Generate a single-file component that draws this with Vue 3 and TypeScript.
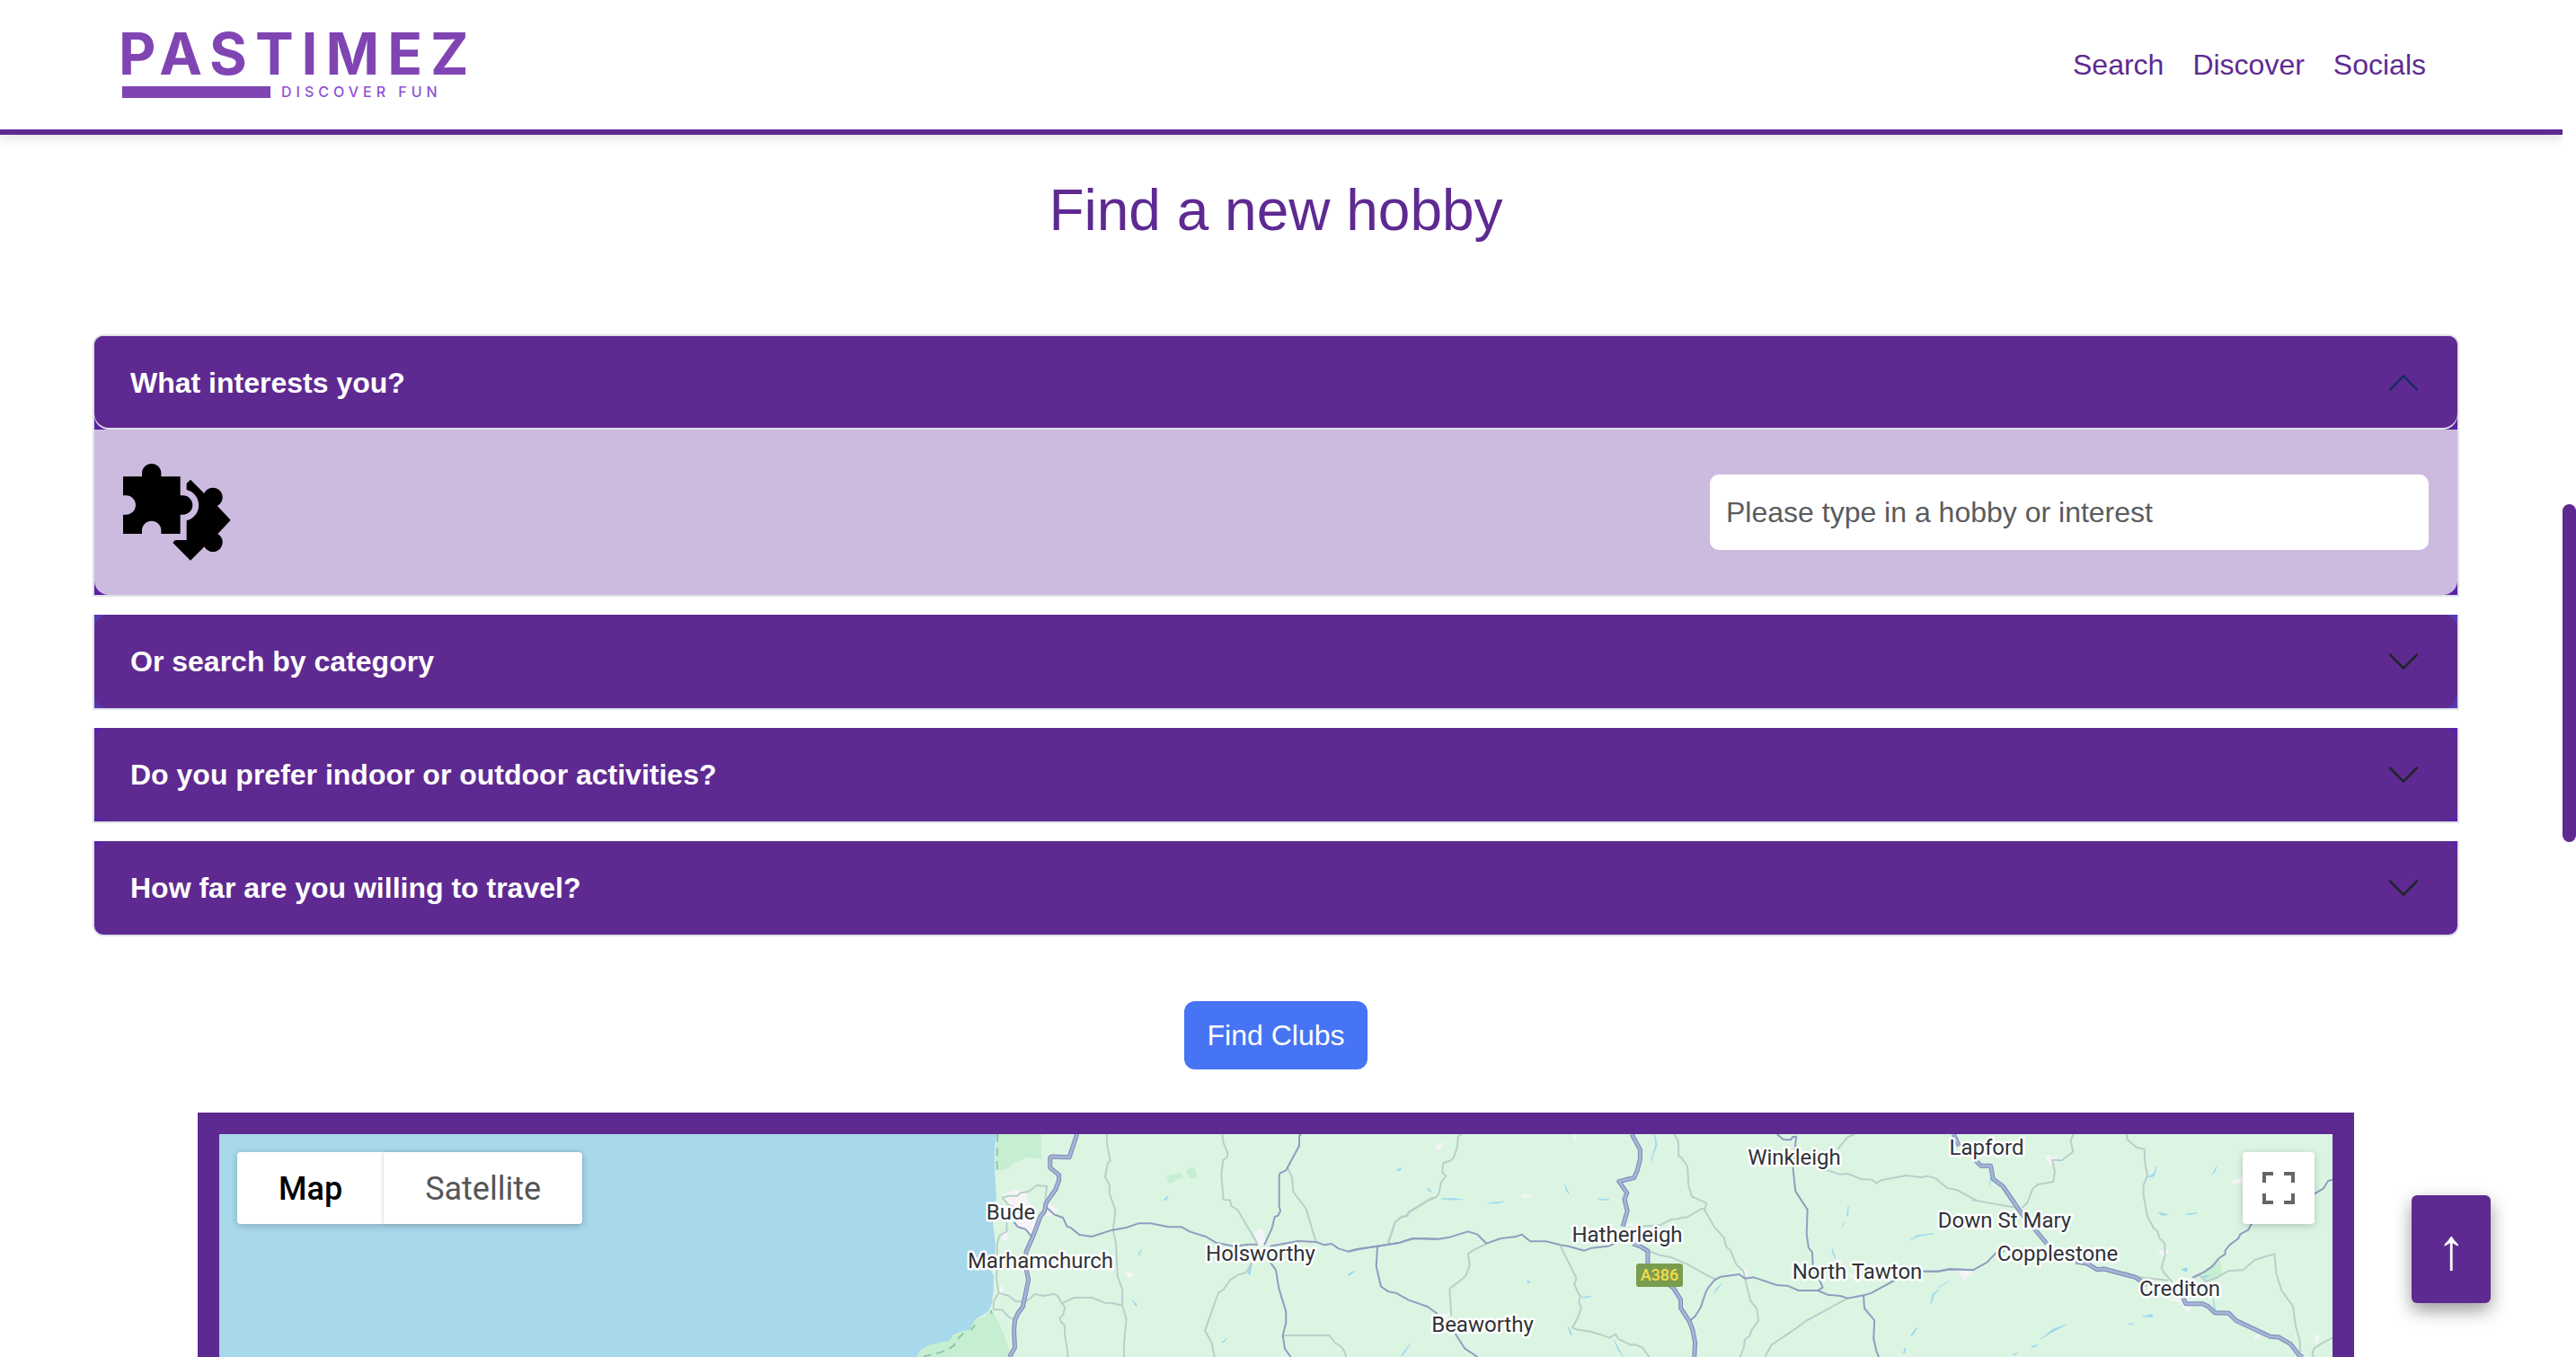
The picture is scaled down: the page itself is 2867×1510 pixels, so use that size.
<script setup lang="ts">
import { ref } from 'vue'

interface Question {
  id: string
  title: string
}

interface Place {
  name: string
  x: number
  y: number
}

interface Tile {
  x: number
  width: number
  green: string[]
  towns: string
  streams: string
  lanes: string[]
  roads: string[]
  trunks: string[]
}

const links: string[] = ['Search', 'Discover', 'Socials']

const questions: Question[] = [
  { id: 'interests', title: 'What interests you?' },
  { id: 'category', title: 'Or search by category' },
  { id: 'setting', title: 'Do you prefer indoor or outdoor activities?' },
  { id: 'distance', title: 'How far are you willing to travel?' },
]

const openId = ref<string>('interests')
const hobby = ref<string>('')

function toggle(id: string): void {
  openId.value = openId.value === id ? '' : id
}

const places: Place[] = [
  { name: 'Bude', x: 881, y: 95 },
  { name: 'Marhamchurch', x: 914, y: 149 },
  { name: 'Holsworthy', x: 1159, y: 141 },
  { name: 'Hatherleigh', x: 1567, y: 120 },
  { name: 'Winkleigh', x: 1753, y: 34 },
  { name: 'North Tawton', x: 1823, y: 161 },
  { name: 'Beaworthy', x: 1406, y: 220 },
  { name: 'Lapford', x: 1967, y: 23 },
  { name: 'Down St Mary', x: 1987, y: 104 },
  { name: 'Copplestone', x: 2046, y: 141 },
  { name: 'Crediton', x: 2182, y: 180 },
]

const tiles: Tile[] = [
  {
    x: 656,
    width: 700,
    green: [
      'M470 126H580V200L584 208L543 204L508 226L500 240L466 250Z',
      'M455 712L472 750L486 790L497 840L503 850L495 870H268L280 845L300 830L350 816L362 795L400 780L415 745L440 735Z',
      'M892 264L908 262L913 286L897 291ZM908 262L928 254L935 270L914 280ZM942 245L956 236L966 248L966 272L954 276L943 262Z',
    ],
    towns:
      'M482 328L515 313L543 316L546 350L560 370L565 410L570 440L556 468L535 450L515 420L500 360ZM596 355L624 378L610 396L590 400ZM1110 452L1130 442L1142 495L1122 500ZM790 582L814 594L798 608ZM480 460L494 450L496 480L484 480ZM470 640L484 628L482 656L474 656ZM1052 356L1066 380L1056 376ZM1560 164L1568 160V180Z',
    streams:
      'M885 346L896 332L892 346ZM822 530L830 510L826 526ZM808 680L820 700L814 698ZM1095 590L1106 555L1100 596ZM1466 246L1478 240L1474 248ZM1543 306L1552 318L1546 316ZM1345 598L1361 584L1355 592ZM1030 822L1042 808L1036 820Z',
    lanes: [
      'M743 126L744 160L752 215L746 222L739 268L750 296V325L765 380L759 445L766 490L770 598L782 645V698L792 744L786 830V870',
      'M1031 126L1034 155L1045 190L1043 204L1033 212L1029 262L1034 345L1050 346L1054 366L1070 380L1118 490',
      'M1194 238L1205 270L1208 318L1240 375L1265 486',
      'M482 338L498 332H520L528 322L548 318L569 297L594 300L590 340L594 360M484 340L498 362L515 372L525 392',
      'M494 420V450L476 465L470 490V560L468 610L474 656L461 684V712H482L500 738L512 743',
      'M474 656L488 662L496 664L518 685H540L552 675L564 660L584 666L612 659L622 668L631 691L662 672H706L738 689L757 690L782 698',
      'M631 691L639 704L634 730L626 740L628 750L638 765L639 800L646 855L645 870',
      'M1105 556L1090 588L1070 596L1050 614L1035 644L1021 657L988 782L1004 820L1012 870',
      'M1182 798H1298L1312 822L1328 836L1336 852L1340 870',
      'M1444 494L1461 422L1476 404L1492 400L1496 388L1548 345L1566 336',
    ],
    roads: [
      'M1228 126L1223 132V165L1190 247L1175 256L1173 265V365L1176 383L1170 398L1162 402L1155 440L1136 496',
      'M594 372L612 394L634 405L644 434L655 440L675 462L706 468L757 446L792 438L822 424H853L897 436H930L951 452L990 468L1015 488L1060 500L1098 494H1120',
      'M1150 500L1220 483L1265 486L1286 496L1304 492L1321 508L1346 518L1364 512L1418 500L1474 488L1506 474L1568 476',
      'M1150 552L1165 580L1172 640L1190 718V756L1182 798L1187 842L1202 870',
      'M512 420L522 436L540 443L556 468',
      'M1418 500L1415 568L1427 635L1446 652L1464 656L1496 680L1543 702L1568 726',
    ],
    trunks: [
      'M669 126L650 203L606 201L602 205V238L624 262V280L616 310L592 355L588 384L578 400L560 465L542 520L540 560L548 612L534 702L522 724L514 748L512 780L514 838L501 870',
    ],
  },
  {
    x: 1256,
    width: 700,
    green: [],
    towns:
      'M216 164L244 152L228 180ZM428 328L460 331L440 342ZM560 126H568V162ZM692 430L708 418L716 436ZM978 568L996 576L998 600L986 604ZM1245 590L1290 600L1270 624ZM1164 232L1194 238L1184 250ZM1526 580L1560 584L1538 614ZM222 728L258 722L250 740Z',
    streams:
      'M122 246L132 240L128 248ZM200 306L208 318ZM234 342L262 341L286 344L260 345ZM350 356L388 351L372 357ZM541 294L552 326L546 318ZM622 342L652 345L634 346ZM764 126L771 160L756 216L768 160ZM1230 438L1240 422L1233 434ZM1244 400L1248 366L1247 396ZM1403 480L1420 464L1460 458L1422 467ZM1208 508L1216 542L1210 528ZM1454 692L1458 660L1474 646L1460 664ZM1404 798L1418 772L1410 796ZM582 670L606 668L590 673ZM550 770L560 798L554 792ZM664 814L686 868L674 846ZM132 868L156 824L142 856ZM0 596L16 582L8 590ZM914 656L932 626L920 640ZM446 618L455 616L450 624ZM1386 856L1391 840L1388 858Z',
    lanes: [
      'M282 126L275 134L273 168L264 206L254 216L238 222L236 254L245 266L233 286L227 325L221 336L205 342L152 386L147 398L134 402L118 420L100 494',
      'M346 492L312 514L300 526L304 564L294 600L254 643L258 732',
      'M530 500L570 606L565 626L574 655L580 666L576 686L582 706L574 738L560 772L570 778L600 784L625 793L652 806L668 794L675 810L706 830L715 828L734 838L752 870',
      'M814 126L824 150L825 201L832 204L847 234L850 300L858 334L894 356L890 380L914 436L938 472L943 500L955 516L968 560L986 582L996 640L1004 682L1020 710L1024 748L1006 782L1002 800L990 812L987 840L978 870',
      'M890 375L880 376L846 404L832 404L822 410L808 410L778 430L730 434',
      'M750 516L778 530L804 536L846 560L894 596L912 608H922',
      'M1264 126L1246 136L1222 176M1190 244L1226 260L1247 258L1280 276L1306 278L1318 290L1330 280L1392 264L1430 270L1446 266L1466 274L1494 306L1518 312L1568 348',
      'M1246 674L1142 750L1120 772L1056 830L1040 870',
    ],
    roads: [
      'M0 518L22 510L74 500L130 488L165 474L226 476L254 470L300 451L322 460L346 491L382 474L420 468L434 461L455 484H494L530 496L550 500L590 515L608 506L650 500L668 490',
      'M1070 126L1086 144L1104 145L1110 135L1118 134L1116 160L1110 240L1116 316L1146 378L1144 460L1149 506L1158 520L1160 575L1172 600L1184 638L1172 648H1124L1096 632L1070 630L1012 604L990 608L976 594L930 602L914 614L898 640L892 656L880 704L866 734L852 750',
      'M1172 648L1196 662L1228 666L1246 674L1286 664L1306 656L1366 612',
      'M1286 664L1288 708L1306 736L1313 748L1311 810L1318 850L1324 870',
      'M268 792L292 842L324 870',
      'M1432 584H1474L1500 577L1560 580',
    ],
    trunks: [
      'M708 126L729 178V210L722 246L714 272L700 276L676 284L696 322L690 344L697 382L686 434',
      'M710 492L728 500L748 516V570L762 590L812 640L830 678V706L852 752L860 780L866 822L864 870',
    ],
  },
  {
    x: 1856,
    width: 767,
    green: ['M712 598L745 556L758 548L763 592L744 614L722 616Z'],
    towns:
      'M358 196L388 204L372 232ZM782 284L810 268V290L790 290ZM616 514L644 514L630 536ZM162 580L198 582L176 614ZM632 672L700 684L684 726L668 690ZM834 818L840 794L852 800ZM972 796L986 800L977 830ZM196 200L210 190L208 220Z',
    streams:
      'M592 270L606 260L614 234L608 266ZM740 262L750 234L746 252ZM618 388L640 394L626 397ZM680 392L706 389L692 394ZM670 578L683 572V586ZM720 600L734 598L722 606ZM742 672L748 718L744 700ZM582 734L604 728V736ZM350 810L380 776L408 762L384 780ZM328 836L342 830L334 838ZM54 798L70 772L60 792ZM100 692L107 654L104 680ZM38 856L42 838ZM116 640L140 618ZM286 862L298 856L290 864ZM234 298L236 270ZM550 760L562 757L554 762Z',
    lanes: [
      'M424 126L418 150L424 184L398 214L376 212L382 250L379 285L344 294L332 308L320 354L308 372',
      'M194 346L226 354L294 371',
      'M546 126L547 144L568 170L586 176L587 220L593 264L584 296V330L593 402L608 442L616 450L620 472L632 490L633 530L625 572L630 588L650 620',
      'M696 606L712 598L726 618L750 606L776 583L810 580L838 545L882 526L886 590L898 648L924 700L930 765L940 820V870',
      'M540 586L576 604L640 614',
      'M1014 806L990 824L972 842L968 860L972 870',
    ],
    roads: [
      'M1014 278L1004 282L993 308L972 326L850 380L828 430L822 446L804 460L800 474L780 496L770 514V526L756 540L740 568L722 586L696 604',
      'M86 584H114L144 577L196 580L228 554L250 520L268 516',
    ],
    trunks: [
      'M152 126L164 166M202 214L214 232H236L242 276L264 300L304 386L364 492M430 552L456 558L478 578L494 576L566 604L592 630M674 672L680 692H718L732 702L746 722L778 724L794 748L872 802L892 804L918 826L938 864L946 870',
    ],
  },
]

const seaTile = tiles[0]
</script>

<template>
  <div class="page">
    <header class="header">
      <a class="logo" href="#" aria-label="Pastimez home">
        <span class="logo-name">PASTIMEZ</span>
        <span class="logo-row">
          <span class="logo-bar"></span>
          <span class="logo-tag">DISCOVER FUN</span>
        </span>
      </a>
      <nav class="nav">
        <a v-for="link in links" :key="link" :href="'#' + link.toLowerCase()">{{ link }}</a>
      </nav>
    </header>

    <main class="main">
      <h1 class="title">Find a new hobby</h1>

      <div class="accordion">
        <section
          v-for="q in questions"
          :key="q.id"
          class="item"
          :class="{ open: openId === q.id, accent: q.id === 'category' }"
        >
          <h2 class="item-heading">
            <button class="item-button" type="button" :aria-expanded="openId === q.id" @click="toggle(q.id)">
              <span>{{ q.title }}</span>
              <svg class="chevron" viewBox="0 0 16 16" aria-hidden="true">
                <path
                  d="M1.646 4.646a.5.5 0 0 1 .708 0L8 10.293l5.646-5.647a.5.5 0 0 1 .708.708l-6 6a.5.5 0 0 1-.708 0l-6-6a.5.5 0 0 1 0-.708z"
                />
              </svg>
            </button>
          </h2>
          <div v-if="q.id === 'interests' && openId === q.id" class="item-body">
            <svg class="puzzle" viewBox="141 468 360 324" aria-hidden="true">
              <path
                d="M141 511H204V500A32 32 0 0 1 268 500V511H332V574H341A32 32 0 0 1 341 638H332V702H268V691A32 32 0 0 0 204 691V702H141V638H151A32 32 0 0 0 151 574H141Z"
              />
              <path
                d="M353 534L366 521L411 566L458 611L500 656L458 701L411 746L366 791L307 732Q311 723 318 723H353V658A53 53 0 0 0 353 555Z"
              />
              <circle cx="441" cy="580" r="32" />
              <circle cx="441" cy="730" r="32" />
            </svg>
            <input
              v-model="hobby"
              class="hobby"
              type="text"
              aria-label="Hobby or interest"
              placeholder="Please type in a hobby or interest"
            />
          </div>
        </section>
      </div>

      <button class="find" type="button">Find Clubs</button>

      <div class="map">
        <svg class="map-canvas" viewBox="0 0 2352 248" preserveAspectRatio="xMidYMin slice">
          <rect width="2352" height="248" fill="#dcf5e3" />
          <svg
            :x="seaTile.x"
            y="-42"
            :width="seaTile.width"
            height="290"
            viewBox="0 0 1568 870"
            preserveAspectRatio="none"
            overflow="visible"
          >
            <path
              d="M-1600 0H468V126L464 180V250L468 340L462 370L460 430L466 500L464 560L448 568L461 596V650L455 700L446 720L415 745L408 778L385 784L360 796L355 815L300 830L280 845L269 870V900H-1600Z"
              fill="#a7d8eb"
            />
          </svg>
          <svg
            v-for="tile in tiles"
            :key="tile.x"
            class="tile"
            :x="tile.x"
            y="-42"
            :width="tile.width"
            height="290"
            viewBox="0 0 1568 870"
            preserveAspectRatio="none"
            overflow="visible"
          >
            <path v-for="d in tile.green" :key="d" class="green" :d="d" />
            <path class="towns" :d="tile.towns" />
            <path class="streams" :d="tile.streams" />
            <path v-for="d in tile.lanes" :key="d" class="lane" :d="d" />
            <path v-for="d in tile.roads" :key="d" class="road" :d="d" />
            <path v-for="d in tile.trunks" :key="'edge' + d" class="trunk-edge" :d="d" />
            <path v-for="d in tile.trunks" :key="d" class="trunk" :d="d" />
          </svg>
          <svg
            :x="seaTile.x"
            y="-42"
            :width="seaTile.width"
            height="290"
            viewBox="0 0 1568 870"
            preserveAspectRatio="none"
          >
            <path class="coast" d="M471 126L469 215L471 248M454 714L457 726M415 764L404 780M386 790L368 815L362 832L345 846L325 856L282 870" />
          </svg>
          <rect x="1577" y="144" width="52" height="26" rx="3" fill="#7a9c4f" />
          <text class="shield" x="1603" y="163">A386</text>
          <text v-for="p in places" :key="p.name" class="place-label" :x="p.x" :y="p.y">{{ p.name }}</text>
        </svg>

        <div class="map-bar">
          <div class="map-types">
            <button class="map-type active" type="button">Map</button>
            <button class="map-type" type="button">Satellite</button>
          </div>
          <button class="fullscreen" type="button" aria-label="Toggle fullscreen view">
            <svg viewBox="0 0 18 18" aria-hidden="true">
              <path d="M0 0v6h2V2h4V0H0zm16 0h-4v2h4v4h2V0h-2zm0 16h-4v2h6v-6h-2v4zM2 12H0v6h6v-2H2v-4z" />
            </svg>
          </button>
        </div>
      </div>
    </main>

    <button class="to-top" type="button" aria-label="Back to top">↑</button>
    <div class="scrollbar" aria-hidden="true"><div class="thumb"></div></div>
  </div>
</template>

<style>
body {
  margin: 0;
  background: #fff;
}
</style>

<style scoped>
.page {
  position: relative;
  box-sizing: border-box;
  display: flex;
  flex-direction: column;
  height: 100vh;
  padding-right: 15px;
  overflow: hidden;
  font-family: 'Liberation Sans', Arial, sans-serif;
  font-size: 32px;
  color: #5e2a91;
}

button,
input {
  box-sizing: border-box;
  margin: 0;
  font: inherit;
}

button {
  padding: 0;
  border: 0;
  cursor: pointer;
}

.header {
  flex: none;
  display: flex;
  align-items: center;
  justify-content: space-between;
  height: 144px;
  padding: 0 152px 0 132px;
  border-bottom: 6px solid #5e2a91;
  box-shadow: 0 4px 12px rgba(0, 0, 0, 0.12);
}

.logo {
  display: flex;
  flex-direction: column;
  gap: 12px;
  color: #8045b3;
  text-decoration: none;
  font-family: Inter, sans-serif;
}

.logo-name {
  font-size: 64px;
  font-weight: 700;
  line-height: 48px;
  letter-spacing: 9px;
}

.logo-row {
  display: flex;
  align-items: center;
  gap: 12px;
  padding-left: 4px;
}

.logo-bar {
  width: 165px;
  height: 13px;
  background: #8045b3;
}

.logo-tag {
  font-size: 16px;
  font-weight: 500;
  line-height: 13px;
  letter-spacing: 5px;
  color: #9050d4;
}

.nav {
  display: flex;
  gap: 32px;
}

.nav a {
  color: #5e2a91;
  text-decoration: none;
}

.main {
  flex: 1;
  min-height: 0;
  display: flex;
  flex-direction: column;
  align-items: center;
  padding: 46px 12px 0 0;
}

.title {
  margin: 0 0 100px;
  font-size: 64px;
  font-weight: 400;
  line-height: 76px;
}

.accordion {
  align-self: stretch;
  display: flex;
  flex-direction: column;
  gap: 20px;
  margin: 0 103px;
}

.item {
  border: 2px solid #dee2e6;
  border-top: 0;
  background: #5a22a6;
  overflow: hidden;
}

.item:first-child {
  border-top: 2px solid #dee2e6;
  border-radius: 12px 12px 0 0;
}

.item:last-child {
  border-radius: 0 0 12px 12px;
}

.item.accent {
  background: #5638b4;
}

.item-heading {
  margin: 0;
  font-size: 32px;
}

.item-button {
  display: flex;
  align-items: center;
  justify-content: space-between;
  width: 100%;
  height: 104px;
  padding: 0 40px;
  border-radius: 16px;
  background: #5e2a91;
  color: #fff;
  font-weight: 700;
  text-align: left;
}

.open .item-button {
  border-radius: 0 0 16px 16px;
  box-shadow: inset 0 -2px 0 #dee2e6;
}

.chevron {
  width: 40px;
  height: 40px;
  fill: #212529;
}

.open .chevron {
  fill: #1c2b63;
  transform: rotate(180deg);
}

.item-body {
  display: flex;
  align-items: center;
  justify-content: space-between;
  height: 184px;
  padding: 0 32px;
  border-radius: 0 0 16px 16px;
  background: #ccbbde;
}

.puzzle {
  width: 120px;
  height: 108px;
}

.hobby {
  width: 800px;
  height: 84px;
  padding: 0 16px;
  border: 2px solid #fff;
  border-radius: 10px;
  background: #fff;
  color: #212529;
}

.hobby::placeholder {
  color: #595c5f;
  opacity: 1;
}

.find {
  flex: none;
  height: 76px;
  margin: 72px 0 48px;
  padding: 0 26px;
  border-radius: 12px;
  background: #4674f4;
  color: #fff;
}

.map {
  position: relative;
  align-self: stretch;
  flex: 1;
  min-height: 0;
  margin: 0 220px;
  border: 24px solid #5e2a91;
  border-bottom: 0;
  overflow: hidden;
  font-family: Roboto, sans-serif;
}

.map-canvas {
  display: block;
  width: 100%;
  height: 100%;
}

.tile path {
  vector-effect: non-scaling-stroke;
  stroke-linejoin: round;
}

.green {
  fill: #c6eed0;
}

.towns {
  fill: #f5f5f7;
}

.streams {
  fill: #90d4ee;
  stroke: #a5dcee;
  stroke-width: 1;
}

.lane,
.road,
.trunk,
.trunk-edge {
  fill: none;
}

.lane {
  stroke: #b9cfca;
  stroke-width: 2;
}

.road {
  stroke: #8f9dbf;
  stroke-width: 2;
}

.trunk-edge {
  stroke: #7b88b2;
  stroke-width: 5;
}

.trunk {
  stroke: #a6b4d8;
  stroke-width: 3;
}

.coast {
  fill: none;
  stroke: #8cc7a8;
  stroke-width: 2;
  stroke-dasharray: 9 6;
  vector-effect: non-scaling-stroke;
}

.place-label {
  font-size: 24px;
  text-anchor: middle;
  fill: #2f3338;
  stroke: #fff;
  stroke-width: 5;
  stroke-linejoin: round;
  paint-order: stroke;
}

.shield {
  font-size: 18px;
  font-weight: 500;
  text-anchor: middle;
  fill: #f6dc4a;
}

.map-bar {
  position: absolute;
  top: 20px;
  right: 20px;
  left: 20px;
  display: flex;
  justify-content: space-between;
}

.map-types {
  display: flex;
  border-radius: 4px;
  box-shadow: 0 2px 8px rgba(0, 0, 0, 0.2);
}

.map-type {
  height: 80px;
  padding: 2px 46px 0;
  background: #fff;
  color: #565656;
  font-size: 36px;
}

.map-type:first-child {
  border-radius: 4px 0 0 4px;
}

.map-type:last-child {
  border-radius: 0 4px 4px 0;
  box-shadow: -1px 0 4px rgba(0, 0, 0, 0.15);
}

.map-type.active {
  color: #000;
  font-weight: 500;
}

.fullscreen {
  display: flex;
  align-items: center;
  justify-content: center;
  width: 80px;
  height: 80px;
  border-radius: 4px;
  background: #fff;
  box-shadow: 0 2px 8px rgba(0, 0, 0, 0.2);
}

.fullscreen svg {
  width: 36px;
  height: 36px;
  fill: #666;
}

.to-top {
  position: absolute;
  right: 95px;
  bottom: 60px;
  width: 88px;
  height: 120px;
  border-radius: 6px;
  background: #5e2a91;
  box-shadow: 0 8px 20px rgba(0, 0, 0, 0.4);
  color: #fff;
  font-size: 64px;
}

.scrollbar {
  position: absolute;
  top: 0;
  right: 0;
  bottom: 0;
  width: 15px;
  background: #fff;
}

.thumb {
  height: 376px;
  margin-top: 561px;
  border-radius: 8px;
  background: #5e2a91;
}
</style>
